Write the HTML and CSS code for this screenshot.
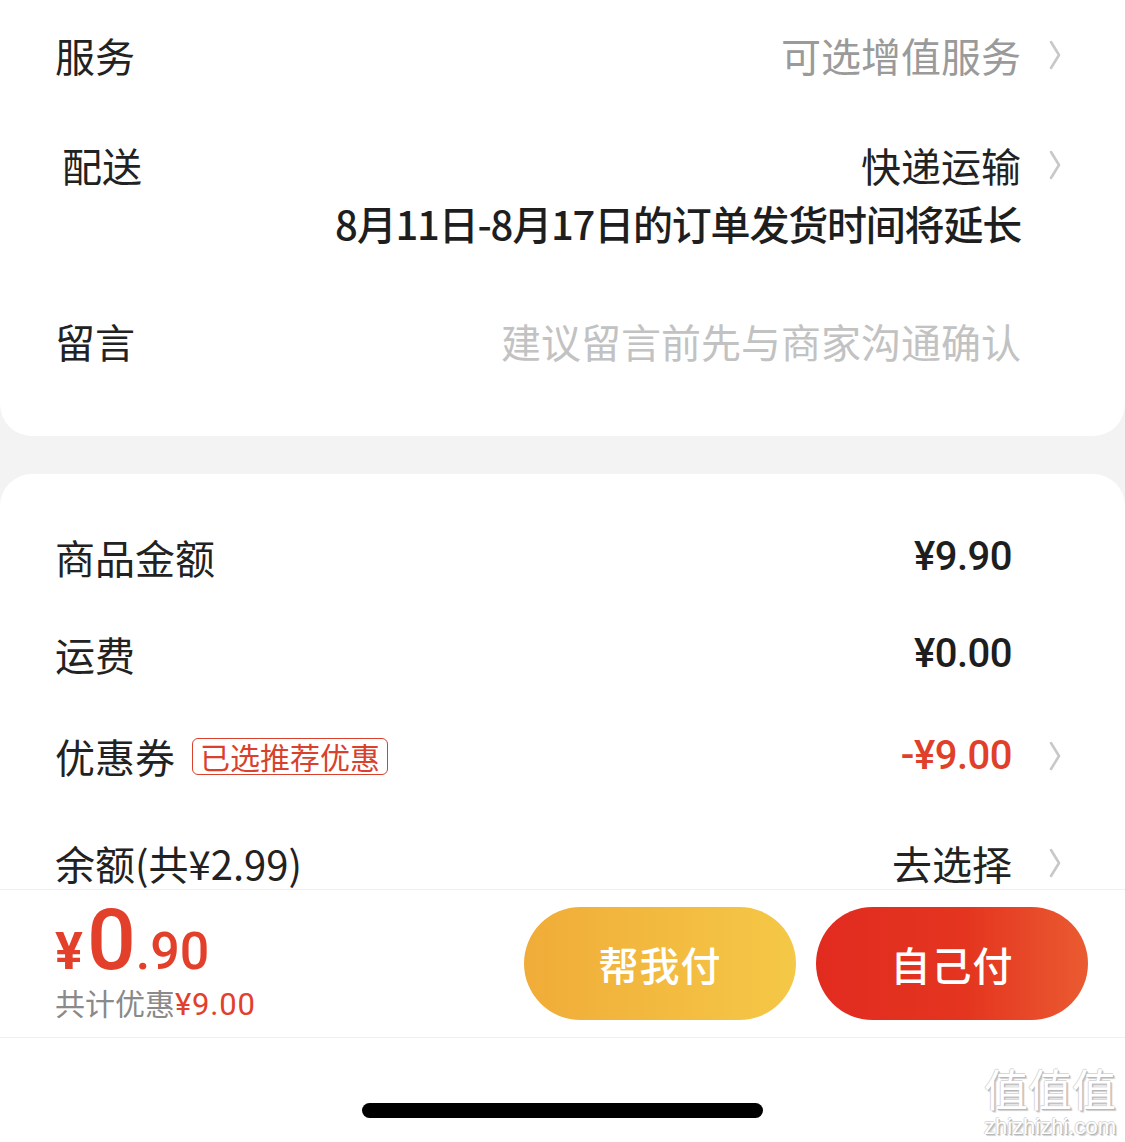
FILE: index.html
```html
<!DOCTYPE html>
<html lang="zh-CN">
<head>
<meta charset="utf-8">
<title>确认订单</title>
<link rel="stylesheet" href="styles.css">
</head>
<body>
<div class="page">
  <section class="card card-top">
    <div class="row row-service">
      <span class="label">服务</span>
      <div class="value-wrap">
        <span class="value muted">可选增值服务</span>
        <svg class="chev" viewBox="0 0 14 30" width="14" height="30"><polyline points="3,2 11,15 3,28" /></svg>
      </div>
    </div>
    <div class="row row-delivery">
      <span class="label label-shift">配送</span>
      <div class="value-wrap top">
        <div class="value-stack">
          <span class="value">快递运输</span>
          <span class="value strong">8月11日-8月17日的订单发货时间将延长</span>
        </div>
        <svg class="chev chev-top" viewBox="0 0 14 30" width="14" height="30"><polyline points="3,2 11,15 3,28" /></svg>
      </div>
    </div>
    <div class="row row-note">
      <span class="label">留言</span>
      <div class="value-wrap">
        <span class="value placeholder">建议留言前先与商家沟通确认</span>
        <span class="chev-space"></span>
      </div>
    </div>
  </section>

  <section class="card card-bottom">
    <div class="row2 r1">
      <span class="label">商品金额</span>
      <div class="value-wrap2">
        <span class="num">¥9.90</span>
        <span class="chev-space2"></span>
      </div>
    </div>
    <div class="row2 r2">
      <span class="label">运费</span>
      <div class="value-wrap2">
        <span class="num">¥0.00</span>
        <span class="chev-space2"></span>
      </div>
    </div>
    <div class="row2 r3">
      <div class="label-group">
        <span class="label">优惠券</span>
        <span class="badge">已选推荐优惠</span>
      </div>
      <div class="value-wrap2">
        <span class="num red">-¥9.00</span>
        <svg class="chev" viewBox="0 0 14 30" width="14" height="30"><polyline points="3,2 11,15 3,28" /></svg>
      </div>
    </div>
    <div class="row2 r4">
      <span class="label">余额(共¥2.99)</span>
      <div class="value-wrap2">
        <span class="value">去选择</span>
        <svg class="chev" viewBox="0 0 14 30" width="14" height="30"><polyline points="3,2 11,15 3,28" /></svg>
      </div>
    </div>
  </section>

  <footer class="paybar">
    <div class="paybar-main">
      <div class="price-block">
        <div class="price">
          <span class="yen">¥</span><span class="int">0</span><span class="dec">.90</span>
        </div>
        <div class="saving">共计优惠<span class="saving-num">¥9.00</span></div>
      </div>
      <div class="buttons">
        <button class="btn btn-help">帮我付</button>
        <button class="btn btn-self">自己付</button>
      </div>
    </div>
    <div class="home-area">
      <div class="home-indicator"></div>
    </div>
    <div class="watermark">
      <span class="wm-cn">值值值</span>
      <span class="wm-en">zhizhizhi.com</span>
    </div>
  </footer>
</div>
</body>
</html>
```
FILE: styles.css
```css
* {
  box-sizing: border-box;
}

html, body {
  margin: 0;
  padding: 0;
}

body {
  background: #f3f3f3;
  font-family: "Noto Sans CJK SC", "Noto Sans", sans-serif;
  color: #222;
}

.page {
  position: relative;
  width: 1125px;
  height: 1142px;
  overflow: hidden;
  background: #f3f3f3;
}

.card {
  background: #fff;
}

.card-top {
  height: 436px;
  border-radius: 0 0 32px 32px;
}

.card-bottom {
  margin-top: 38px;
  height: 700px;
  border-radius: 32px 32px 0 0;
}

.label {
  font-size: 40px;
  line-height: 58px;
  color: #222;
  white-space: nowrap;
}

.label-shift {
  margin-left: 7px;
}

.row {
  display: flex;
  justify-content: space-between;
  align-items: flex-start;
  padding: 0 63px 0 55px;
}

.row-service {
  padding-top: 26px;
  height: 114px;
}

.row-delivery {
  padding-top: 22px;
  height: 171px;
}

.row-note {
  padding-top: 27px;
}

.value-wrap {
  display: flex;
  align-items: center;
  gap: 27px;
}

.value-wrap.top {
  align-items: flex-start;
}

.value-stack {
  display: flex;
  flex-direction: column;
  align-items: flex-end;
}

.value {
  font-size: 40px;
  line-height: 58px;
  color: #222;
  white-space: nowrap;
}

.value.muted {
  color: #9a9a9a;
}

.value.placeholder {
  color: #c2c2c2;
}

.value.strong {
  font-weight: 500;
  color: #1e1e1e;
  letter-spacing: -1.2px;
}

.chev {
  width: 14px;
  height: 30px;
  flex: none;
}

.chev polyline {
  fill: none;
  stroke: #c8c8c8;
  stroke-width: 2.6;
  stroke-linecap: round;
  stroke-linejoin: round;
}

.chev-top {
  margin-top: 14px;
}

.chev-space {
  width: 14px;
}

.row2 {
  display: flex;
  justify-content: space-between;
  align-items: center;
  padding: 0 63px 0 55px;
}

.r1 { padding-top: 54px; }
.r2 { padding-top: 39px; }
.r3 { padding-top: 44px; }
.r4 { padding-top: 49px; }

.label-group {
  display: flex;
  align-items: center;
  gap: 17px;
}

.badge {
  font-size: 30px;
  line-height: 35px;
  color: #d9412d;
  border: 1.5px solid #d9412d;
  border-radius: 6px;
  padding: 0 7px;
  white-space: nowrap;
}

.value-wrap2 {
  display: flex;
  align-items: center;
  gap: 36px;
}

.chev-space2 {
  width: 14px;
}

.num {
  font-family: "Roboto", "Noto Sans", sans-serif;
  font-weight: 500;
  font-size: 40px;
  line-height: 58px;
  color: #1e1e1e;
  letter-spacing: -0.5px;
}

.num.red {
  color: #e0402a;
}

.paybar {
  position: absolute;
  left: 0;
  right: 0;
  bottom: 0;
  height: 253px;
  background: #fff;
  border-top: 1px solid #f0f0f0;
}

.paybar-main {
  height: 148px;
  display: flex;
  justify-content: space-between;
  align-items: center;
  padding: 0 37px 0 55px;
  border-bottom: 1px solid #f0f0f0;
}

.price-block {
  display: flex;
  flex-direction: column;
  padding-top: 2px;
}

.price {
  color: #e2402a;
  font-family: "Roboto", "Noto Sans", sans-serif;
  font-weight: 500;
  line-height: 1;
  display: flex;
  align-items: baseline;
  height: 72px;
}

.yen {
  font-size: 52px;
  font-weight: 700;
  margin-right: 4px;
}

.int {
  font-size: 86px;
  line-height: 72px;
}

.dec {
  font-size: 52px;
}

.saving {
  font-size: 30px;
  line-height: 40px;
  color: #8a8a8a;
  margin-top: 6px;
}

.saving-num {
  color: #e2402a;
  font-family: "Roboto", "Noto Sans", sans-serif;
  font-size: 31px;
  letter-spacing: 0.8px;
}

.buttons {
  display: flex;
  gap: 20px;
}

.btn {
  width: 272px;
  height: 113px;
  border: none;
  border-radius: 57px;
  color: #fff;
  font-family: "Noto Sans CJK SC", sans-serif;
  font-size: 40px;
  font-weight: 500;
  letter-spacing: 1px;
  padding: 0;
}

.btn-help {
  background: linear-gradient(90deg, #f0ac38 0%, #f5c847 100%);
}

.btn-self {
  background: linear-gradient(90deg, #e12b1f 0%, #e4351f 55%, #ea5b31 100%);
}

.home-area {
  height: 104px;
  display: flex;
  justify-content: center;
  padding-top: 65px;
}

.home-indicator {
  width: 401px;
  height: 15px;
  border-radius: 8px;
  background: #000;
}

.watermark {
  position: absolute;
  right: 7px;
  bottom: 6px;
  display: flex;
  flex-direction: column;
  align-items: center;
  gap: 8px;
  width: 136px;
  color: #fff;
  text-shadow: 1px 1px 0 #b8b8b8, -1px 0 0 #d8d8d8, 0 -1px 0 #d8d8d8, 2px 2px 1px #cfcfcf;
}

.wm-cn {
  font-size: 44px;
  line-height: 44px;
}

.wm-en {
  font-family: "Liberation Sans Narrow", "Liberation Sans", sans-serif;
  font-size: 22px;
  line-height: 18px;
}
```
